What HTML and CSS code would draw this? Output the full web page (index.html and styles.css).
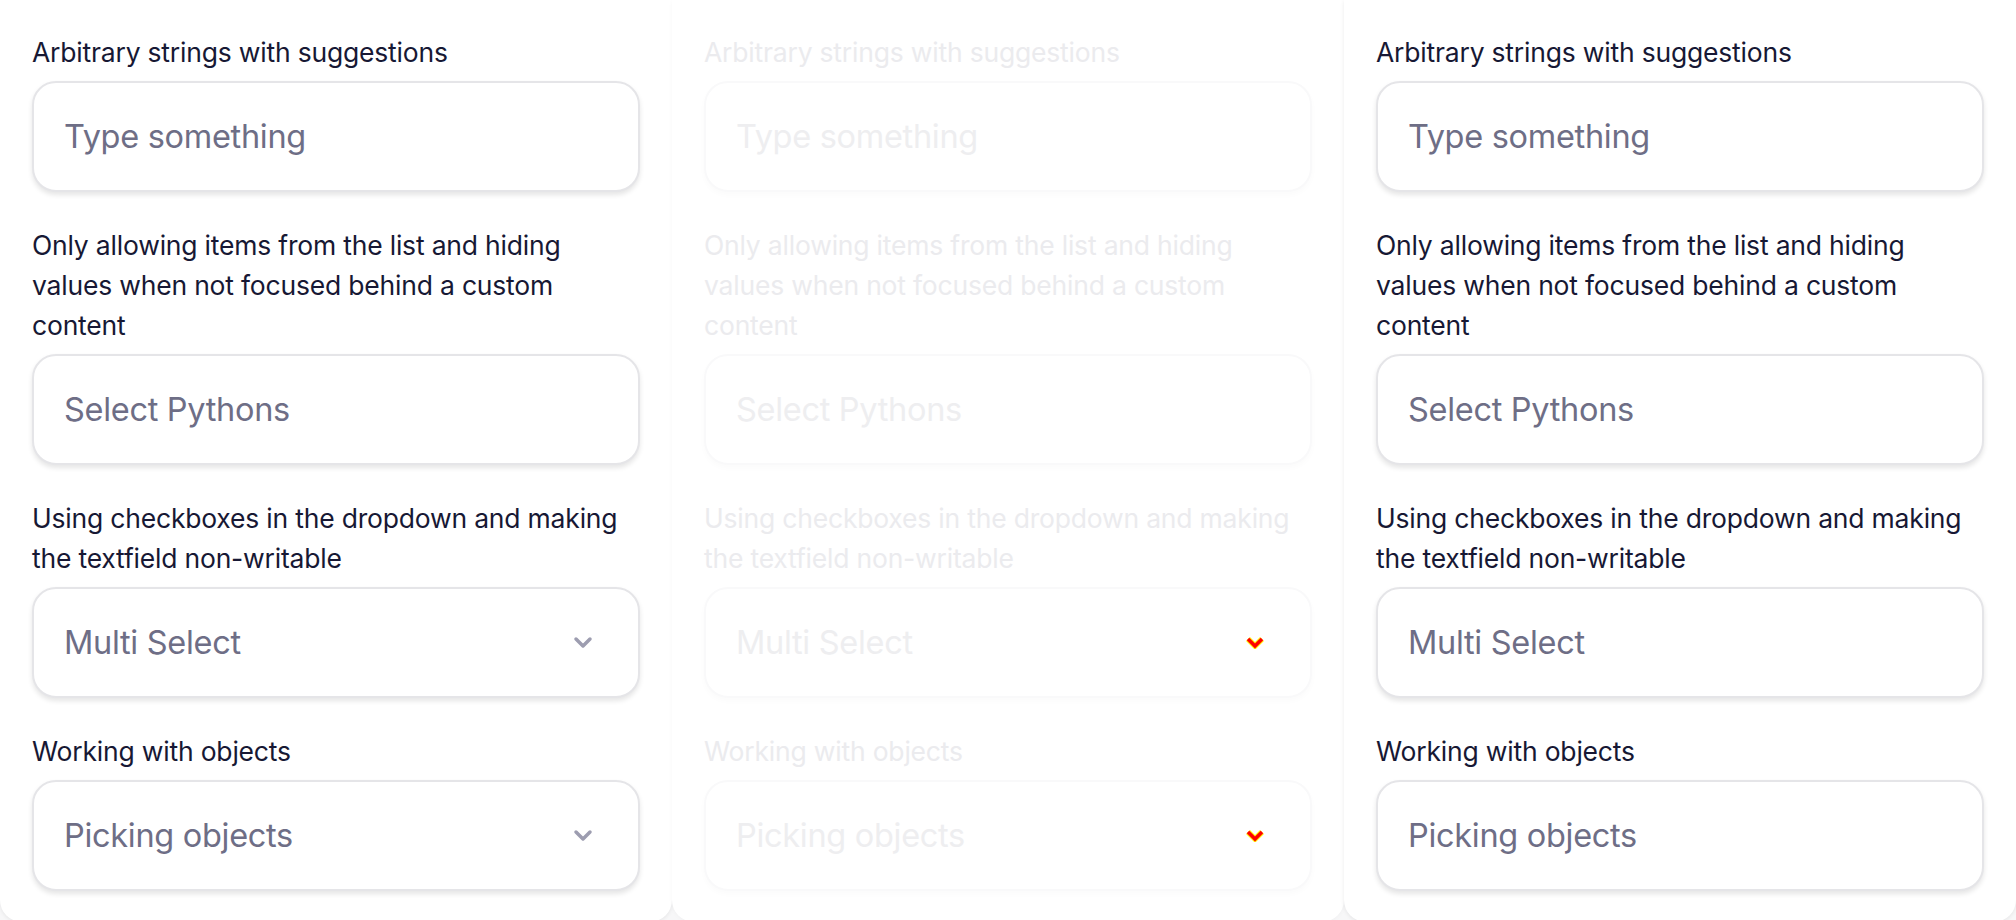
FILE: index.html
```html
<!DOCTYPE html>
<html lang="en">
<head>
<meta charset="utf-8">
<title>Autocomplete examples</title>
<link rel="stylesheet" href="styles.css">
</head>
<body>
<div class="board">
  <section class="panel">
    <div class="field">
      <label class="label">Arbitrary strings with suggestions</label>
      <div class="input"><span class="placeholder">Type something</span></div>
    </div>
    <div class="field">
      <label class="label">Only allowing items from the list and hiding values when not focused behind a custom content</label>
      <div class="input"><span class="placeholder">Select Pythons</span></div>
    </div>
    <div class="field">
      <label class="label">Using checkboxes in the dropdown and making the textfield non-writable</label>
      <div class="input"><span class="placeholder">Multi Select</span>
        <svg class="chev" width="20" height="13" viewBox="0 0 20 13"><polyline points="3,3 10,10 17,3" fill="none" stroke="#9d9db0" stroke-width="3.5" stroke-linecap="round" stroke-linejoin="round"/></svg>
      </div>
    </div>
    <div class="field">
      <label class="label">Working with objects</label>
      <div class="input"><span class="placeholder">Picking objects</span>
        <svg class="chev" width="20" height="13" viewBox="0 0 20 13"><polyline points="3,3 10,10 17,3" fill="none" stroke="#9d9db0" stroke-width="3.5" stroke-linecap="round" stroke-linejoin="round"/></svg>
      </div>
    </div>
  </section>

  <section class="panel ghost">
    <div class="field">
      <label class="label">Arbitrary strings with suggestions</label>
      <div class="input"><span class="placeholder">Type something</span></div>
    </div>
    <div class="field">
      <label class="label">Only allowing items from the list and hiding values when not focused behind a custom content</label>
      <div class="input"><span class="placeholder">Select Pythons</span></div>
    </div>
    <div class="field">
      <label class="label">Using checkboxes in the dropdown and making the textfield non-writable</label>
      <div class="input"><span class="placeholder">Multi Select</span>
        <svg class="chev" width="20" height="13" viewBox="0 0 20 13"><polyline points="3,3 10,10 17,3" fill="none" stroke="#ffee00" stroke-width="5.5" stroke-linejoin="miter"/><polyline points="3,3 10,10 17,3" fill="none" stroke="#ff0000" stroke-width="3.5" stroke-linejoin="miter"/></svg>
      </div>
    </div>
    <div class="field">
      <label class="label">Working with objects</label>
      <div class="input"><span class="placeholder">Picking objects</span>
        <svg class="chev" width="20" height="13" viewBox="0 0 20 13"><polyline points="3,3 10,10 17,3" fill="none" stroke="#ffee00" stroke-width="5.5" stroke-linejoin="miter"/><polyline points="3,3 10,10 17,3" fill="none" stroke="#ff0000" stroke-width="3.5" stroke-linejoin="miter"/></svg>
      </div>
    </div>
  </section>

  <section class="panel">
    <div class="field">
      <label class="label">Arbitrary strings with suggestions</label>
      <div class="input"><span class="placeholder">Type something</span></div>
    </div>
    <div class="field">
      <label class="label">Only allowing items from the list and hiding values when not focused behind a custom content</label>
      <div class="input"><span class="placeholder">Select Pythons</span></div>
    </div>
    <div class="field">
      <label class="label">Using checkboxes in the dropdown and making the textfield non-writable</label>
      <div class="input"><span class="placeholder">Multi Select</span></div>
    </div>
    <div class="field">
      <label class="label">Working with objects</label>
      <div class="input"><span class="placeholder">Picking objects</span></div>
    </div>
  </section>
</div>
</body>
</html>
```

FILE: styles.css
```css
* { box-sizing: border-box; }

html, body {
  margin: 0;
  padding: 0;
  background: #f7f7f8;
  font-family: Inter, "Noto Sans", sans-serif;
}

.board {
  display: grid;
  grid-template-columns: 672px 672px 672px;
  align-items: start;
}

.panel {
  background: #ffffff;
  border-radius: 0 0 22px 22px;
  box-shadow: 0 1px 4px rgba(0, 0, 0, 0.08);
  padding: 32px 32px 31px 32px;
  display: flex;
  flex-direction: column;
  gap: 33px;
}

.field {
  display: flex;
  flex-direction: column;
  gap: 9px;
}

.label {
  font-size: 26.5px;
  line-height: 40px;
  color: #171834;
  letter-spacing: -0.2px;
}

.input {
  height: 111px;
  border: 2px solid #e5e5e8;
  border-radius: 24px;
  background: #ffffff;
  box-shadow: 0 3px 5px rgba(0, 0, 0, 0.10);
  display: flex;
  align-items: center;
  justify-content: space-between;
  padding: 0 45px 0 30px;
}

.placeholder {
  font-size: 32.5px;
  color: #6e6e86;
  letter-spacing: -0.3px;
}

.chev {
  display: block;
  flex: none;
}

.ghost .label { color: #ebebee; }
.ghost .placeholder { color: #eeeef0; }
.ghost .input {
  border-color: #f9f9fa;
  box-shadow: 0 3px 6px rgba(0, 0, 0, 0.02);
}
.ghost { box-shadow: 0 1px 4px rgba(0, 0, 0, 0.03); }
```
